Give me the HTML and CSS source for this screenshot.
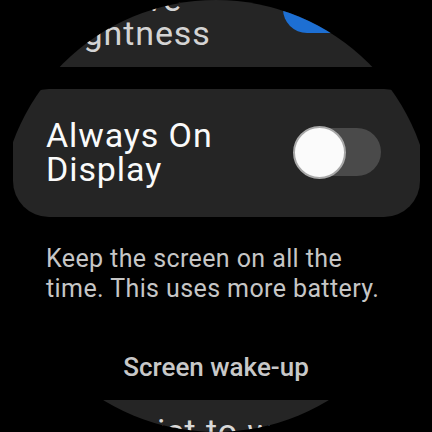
FILE: index.html
```html
<!DOCTYPE html>
<html lang="en">
<head>
<meta charset="utf-8">
<title>Display</title>
<link rel="stylesheet" href="styles.css">
</head>
<body>
<div class="screen">
  <div class="list">
    <div class="card card-top">
      <div class="label">Adaptive<br>brightness</div>
      <div class="switch switch-on switch-top"><span class="thumb"></span></div>
    </div>
    <div class="card">
      <div class="label">Always On<br>Display</div>
      <div class="switch"><span class="thumb"></span></div>
    </div>
    <p class="desc">Keep the screen on all the time. This uses more battery.</p>
    <h2 class="section">Screen wake-up</h2>
    <div class="card card-bottom">
      <div class="label">Raise wrist to wake</div>
    </div>
  </div>
</div>
</body>
</html>
```

FILE: styles.css
```css
html, body {
  margin: 0;
  padding: 0;
  background: #000;
}

body {
  font-family: Roboto, "Noto Sans", sans-serif;
}

/* round watch face */
.screen {
  width: 432px;
  height: 432px;
  border-radius: 50%;
  overflow: hidden;
  background: #000;
}

/* scrolled list, first item partly above the top edge */
.list {
  display: flex;
  flex-direction: column;
  margin-top: -47px;
}

.card {
  display: flex;
  align-items: center;
  justify-content: space-between;
  margin: 0 12px 0 13px;
  padding: 29px 39px 31px 33px;
  background: #252525;
  border-radius: 36px;
}

.card + .card {
  margin-top: 22px;
}

.label {
  font-size: 34px;
  line-height: 34px;
  letter-spacing: 0.9px;
  color: #fafafa;
  white-space: nowrap;
}

.card-top {
  padding-bottom: 17px;
  padding-left: 29px;
}

.card-top .label {
  color: #d4d4d4;
}

.switch {
  position: relative;
  flex: none;
  width: 85px;
  height: 48px;
  border-radius: 24px;
  background: #4a4a4a;
}

.thumb {
  position: absolute;
  left: -3px;
  top: -2.5px;
  box-sizing: border-box;
  width: 53px;
  height: 53px;
  border-radius: 50%;
  background: #fbfbfb;
  border: 2px solid #a8a8a8;
}

.switch-on {
  background: #1d6fd3;
}

.switch-on .thumb {
  left: auto;
  right: -3px;
  border-color: #cfe0f5;
}

.switch-top {
  margin-right: 13px;
  align-self: flex-start;
  margin-top: 3px;
}

.desc {
  margin: 27px 36px 0 46px;
  font-size: 25px;
  line-height: 30px;
  letter-spacing: 0.4px;
  color: #c6c6c6;
}

.section {
  margin: 48px 0 0;
  text-align: center;
  font-size: 26px;
  line-height: 30px;
  font-weight: 500;
  color: #c8c8c8;
}

.card-bottom {
  margin-top: 18px;
  padding-top: 14px;
  padding-left: 8px;
}

.card-bottom .label {
  color: #d8d8d8;
}
```
